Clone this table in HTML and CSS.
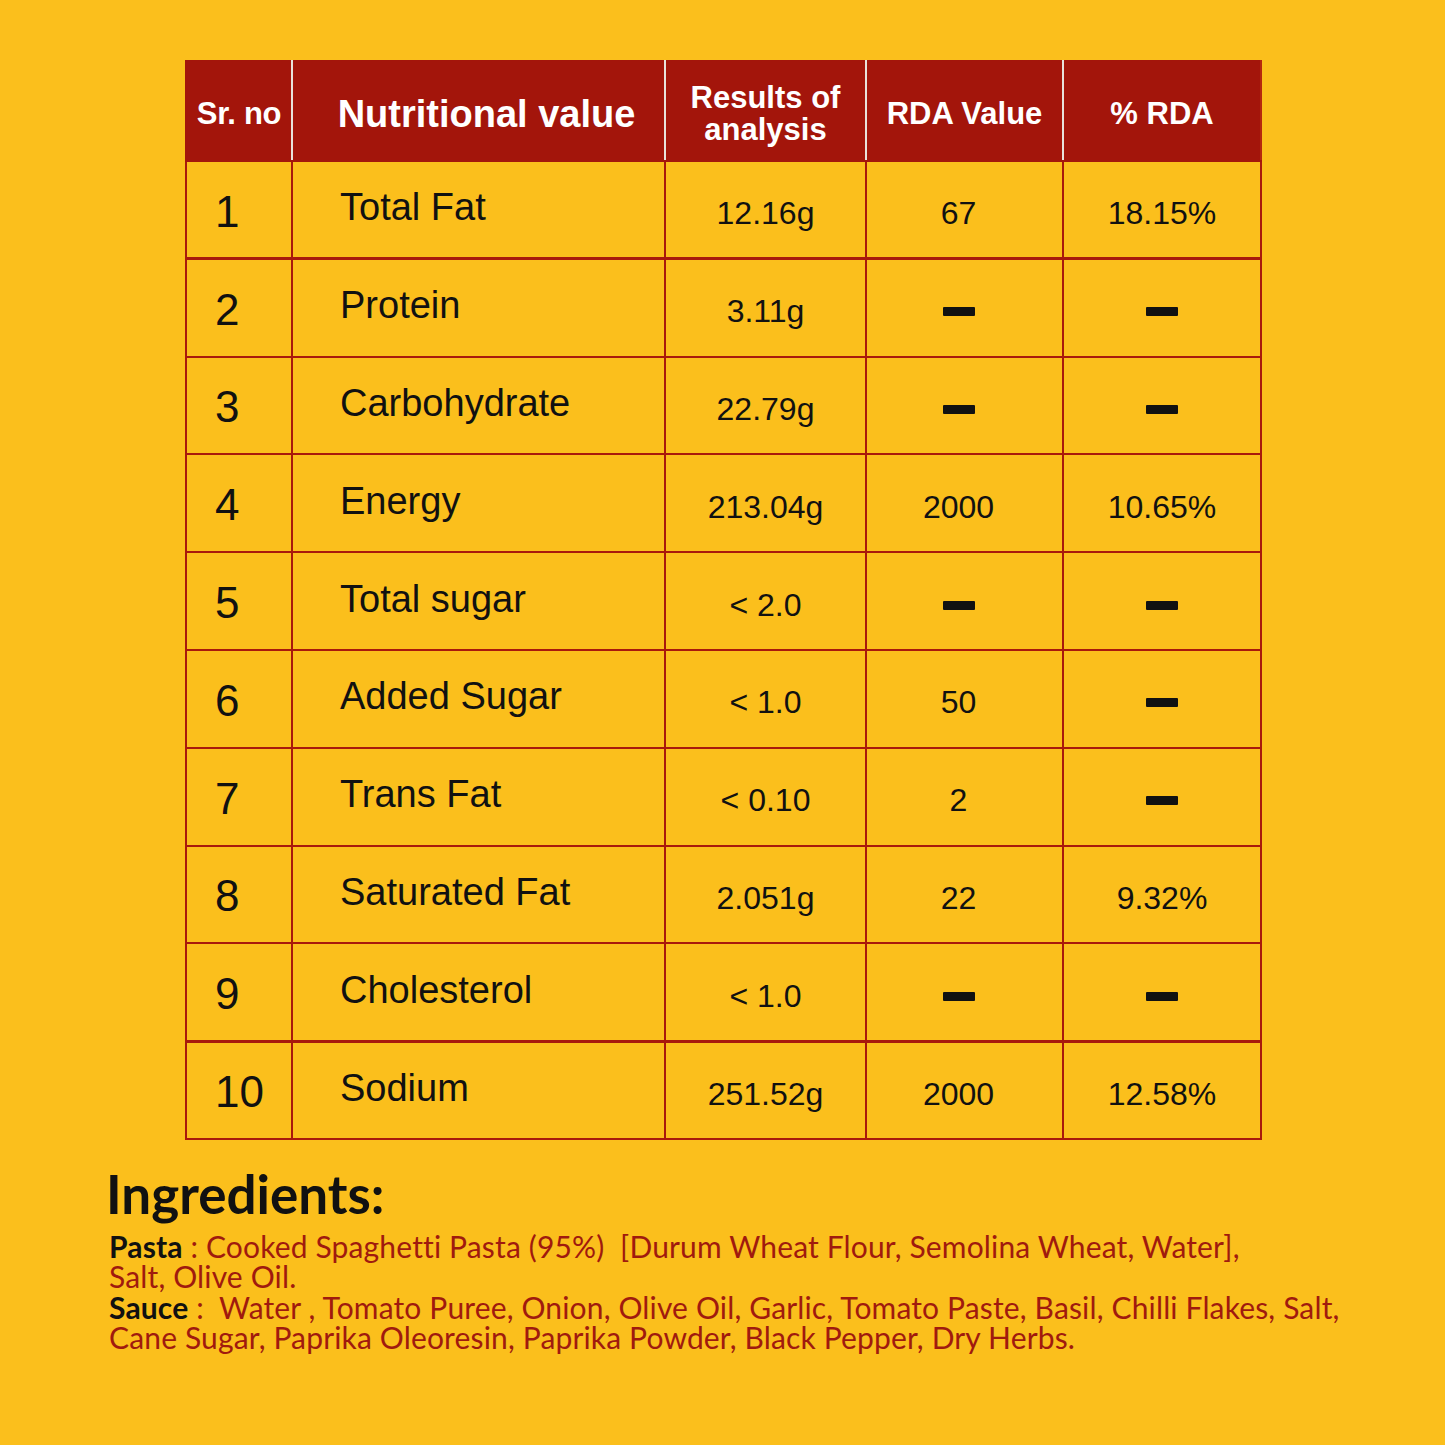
FILE: index.html
```html
<!DOCTYPE html>
<html lang="en">
<head>
<meta charset="utf-8">
<title>Nutrition Facts</title>
<link rel="stylesheet" href="styles.css">
</head>
<body>
<main class="page">
  <table class="nutri">
    <colgroup>
      <col class="c-sr"><col class="c-name"><col class="c-res"><col class="c-rda"><col class="c-pct">
    </colgroup>
    <thead>
      <tr>
        <th class="h-sr">Sr. no</th>
        <th class="h-name">Nutritional value</th>
        <th class="h-small">Results of<br>analysis</th>
        <th class="h-small">RDA Value</th>
        <th class="h-small">% RDA</th>
      </tr>
    </thead>
    <tbody>
      <tr class="thick"><td class="sr">1</td><td class="name">Total Fat</td><td class="val">12.16g</td><td class="val rda">67</td><td class="val">18.15%</td></tr>
      <tr><td class="sr">2</td><td class="name">Protein</td><td class="val">3.11g</td><td class="val rda"><span class="dash"></span></td><td class="val"><span class="dash"></span></td></tr>
      <tr><td class="sr">3</td><td class="name">Carbohydrate</td><td class="val">22.79g</td><td class="val rda"><span class="dash"></span></td><td class="val"><span class="dash"></span></td></tr>
      <tr><td class="sr">4</td><td class="name">Energy</td><td class="val">213.04g</td><td class="val rda">2000</td><td class="val">10.65%</td></tr>
      <tr><td class="sr">5</td><td class="name">Total sugar</td><td class="val">&lt; 2.0</td><td class="val rda"><span class="dash"></span></td><td class="val"><span class="dash"></span></td></tr>
      <tr><td class="sr">6</td><td class="name">Added Sugar</td><td class="val">&lt; 1.0</td><td class="val rda">50</td><td class="val"><span class="dash"></span></td></tr>
      <tr><td class="sr">7</td><td class="name">Trans Fat</td><td class="val">&lt; 0.10</td><td class="val rda">2</td><td class="val"><span class="dash"></span></td></tr>
      <tr><td class="sr">8</td><td class="name">Saturated Fat</td><td class="val">2.051g</td><td class="val rda">22</td><td class="val">9.32%</td></tr>
      <tr class="thick"><td class="sr">9</td><td class="name">Cholesterol</td><td class="val">&lt; 1.0</td><td class="val rda"><span class="dash"></span></td><td class="val"><span class="dash"></span></td></tr>
      <tr><td class="sr">10</td><td class="name">Sodium</td><td class="val">251.52g</td><td class="val rda">2000</td><td class="val">12.58%</td></tr>
    </tbody>
  </table>

  <section class="ingredients">
    <h2 class="ing-title">Ingredients:</h2>
    <p class="ing-text"><b class="lbl">Pasta</b> : Cooked Spaghetti Pasta (95%)&nbsp; [Durum Wheat Flour, Semolina Wheat, Water],<br>Salt, Olive Oil.<br><b class="lbl">Sauce</b> :&nbsp; Water , Tomato Puree, Onion, Olive Oil, Garlic, Tomato Paste, Basil, Chilli Flakes, Salt,<br>Cane Sugar, Paprika Oleoresin, Paprika Powder, Black Pepper, Dry Herbs.</p>
  </section>
</main>
</body>
</html>
```
FILE: styles.css
```css
html, body {
  margin: 0;
  padding: 0;
  background: #fbbf1c;
}
.page {
  width: 1445px;
  height: 1445px;
  box-sizing: border-box;
  padding: 60px 0 0 0;
  background: #fbbf1c;
}
.nutri {
  margin-left: 185px;
  width: 1075px;
  border-collapse: collapse;
  table-layout: fixed;
  font-family: "Liberation Sans", Arial, sans-serif;
  color: #111;
}
.c-sr { width: 106px; }
.c-name { width: 373px; }
.c-res { width: 201px; }
.c-rda { width: 197px; }
.c-pct { width: 198px; }

.nutri thead tr { height: 100px; }
.nutri th {
  background: #a3150b;
  color: #fff;
  font-weight: 700;
  text-align: center;
  vertical-align: middle;
  padding: 6px 0 0 0;
  border-top: 2px solid #a3150b;
  border-left: 2px solid #e9e2dc;
  border-right: 2px solid #e9e2dc;
  border-bottom: 2px solid #a3150b;
}
.nutri th:first-child { border-left-color: #a3150b; }
.nutri th:last-child { border-right-color: #b5280d; }
.h-sr { font-size: 31px; letter-spacing: -0.3px; }
.h-name { font-size: 38px; padding-left: 16px !important; }
.h-small { font-size: 31px; line-height: 32px; }

.nutri tbody tr { height: 97.8px; }
.nutri td {
  border: 2px solid #a8190c;
  vertical-align: middle;
  padding: 0;
}
.nutri tr.thick td { border-bottom-width: 3px; }

.sr {
  font-size: 44px;
  padding-left: 28px !important;
  padding-top: 4px !important;
}
.name {
  font-size: 38px;
  padding-left: 47px !important;
  padding-bottom: 4px !important;
}
.val {
  font-size: 32px;
  text-align: center;
  padding-top: 8px !important;
}
.val.rda { padding-right: 12px !important; }
.dash {
  display: inline-block;
  width: 32px;
  height: 9px;
  background: #111;
  border-radius: 1px;
  vertical-align: middle;
  position: relative;
  top: -2px;
}

.ingredients {
  margin: 24px 0 0 106px;
  font-family: Lato, "Open Sans", sans-serif;
  font-variant-ligatures: none;
}
.ing-title {
  margin: 0;
  font-size: 53px;
  font-weight: 700;
  line-height: 60px;
  color: #111;
}
.ing-text {
  margin: 7px 0 0 3px;
  font-size: 30px;
  line-height: 30.5px;
  color: #a01a0e;
  letter-spacing: 0.15px;
}
.lbl {
  color: #111;
  font-weight: 700;
}
```
